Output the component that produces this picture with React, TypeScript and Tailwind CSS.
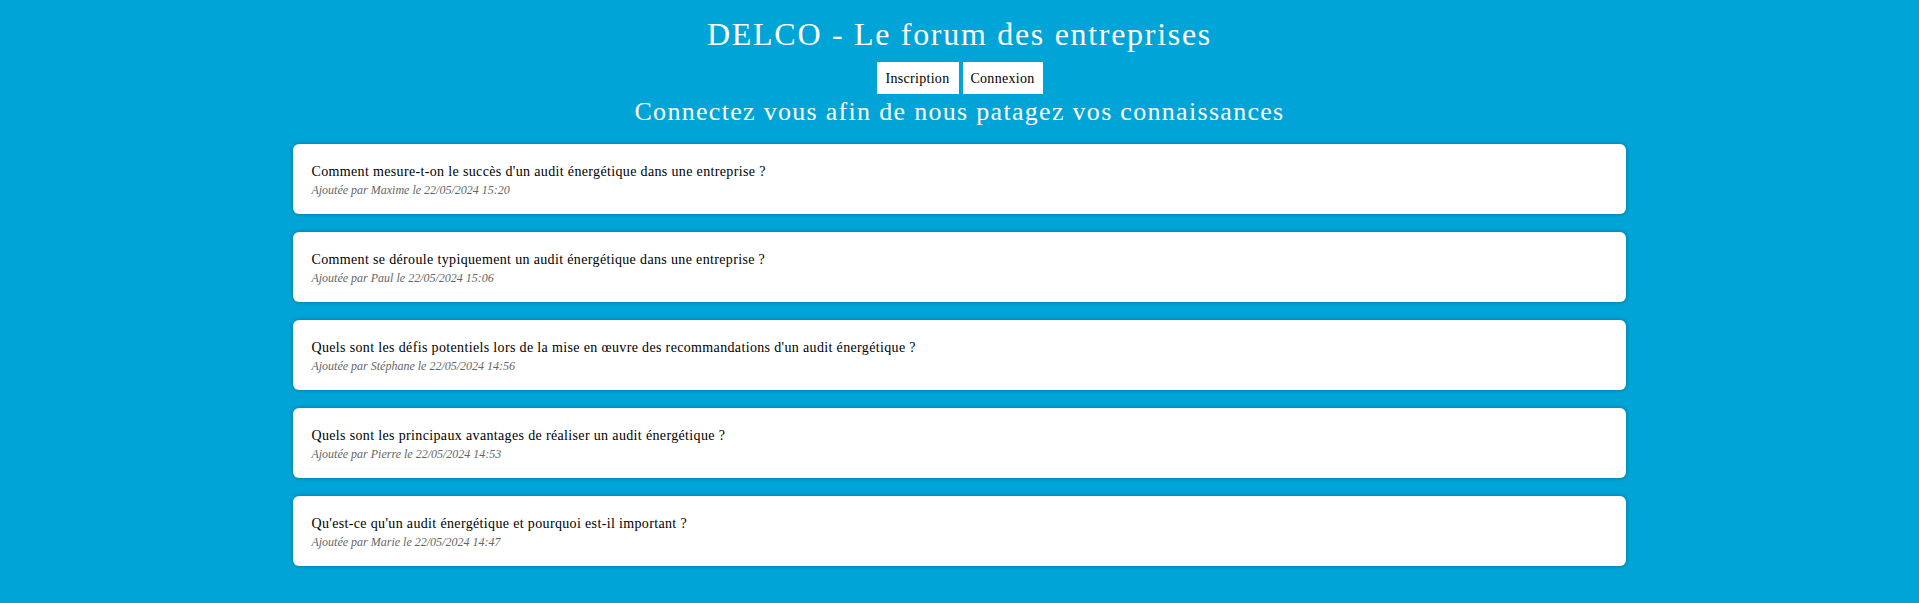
import React from "react";

const posts = [
  { t: "Comment mesure-t-on le succès d'un audit énergétique dans une entreprise ?", a: "Maxime", d: "22/05/2024 15:20" },
  { t: "Comment se déroule typiquement un audit énergétique dans une entreprise ?", a: "Paul", d: "22/05/2024 15:06" },
  { t: "Quels sont les défis potentiels lors de la mise en œuvre des recommandations d'un audit énergétique ?", a: "Stéphane", d: "22/05/2024 14:56" },
  { t: "Quels sont les principaux avantages de réaliser un audit énergétique ?", a: "Pierre", d: "22/05/2024 14:53" },
  { t: "Qu'est-ce qu'un audit énergétique et pourquoi est-il important ?", a: "Marie", d: "22/05/2024 14:47" },
];

export default function App() {
  return (
    <div className="min-h-[603px] bg-[#01a4d6] px-2 pb-8 font-['Liberation_Serif',serif] text-black">
      <div className="flex flex-col items-center">
        <h1 className="mt-[14px] text-[32px] leading-[40px] tracking-[1.7px] text-white">DELCO - Le forum des entreprises</h1>
        <div className="mt-[8px] flex gap-[4px]">
          <button className="h-[32px] w-[82px] bg-white text-[14px] tracking-[0.3px] text-black">Inscription</button>
          <button className="h-[32px] w-[80px] bg-white text-[14px] tracking-[0.3px] text-black">Connexion</button>
        </div>
        <h2 className="mt-[2px] text-[26px] leading-[32px] tracking-[1.3px] text-white">Connectez vous afin de nous patagez vos connaissances</h2>
      </div>
      <div className="mx-auto mt-[16px] flex w-[70%] flex-col gap-[18px]">
        {posts.map((p) => (
          <div key={p.d} className="h-[70px] rounded-[6px] bg-white px-[18px] pt-[20px] shadow-[0_0_4px_rgba(0,0,0,0.3)]">
            <div className="text-[14px] leading-[16px] tracking-[0.35px]">{p.t}</div>
            <div className="mt-[3px] text-[12px] italic leading-[14px] text-[#666]">
              Ajoutée par {p.a} le {p.d}
            </div>
          </div>
        ))}
      </div>
    </div>
  );
}
